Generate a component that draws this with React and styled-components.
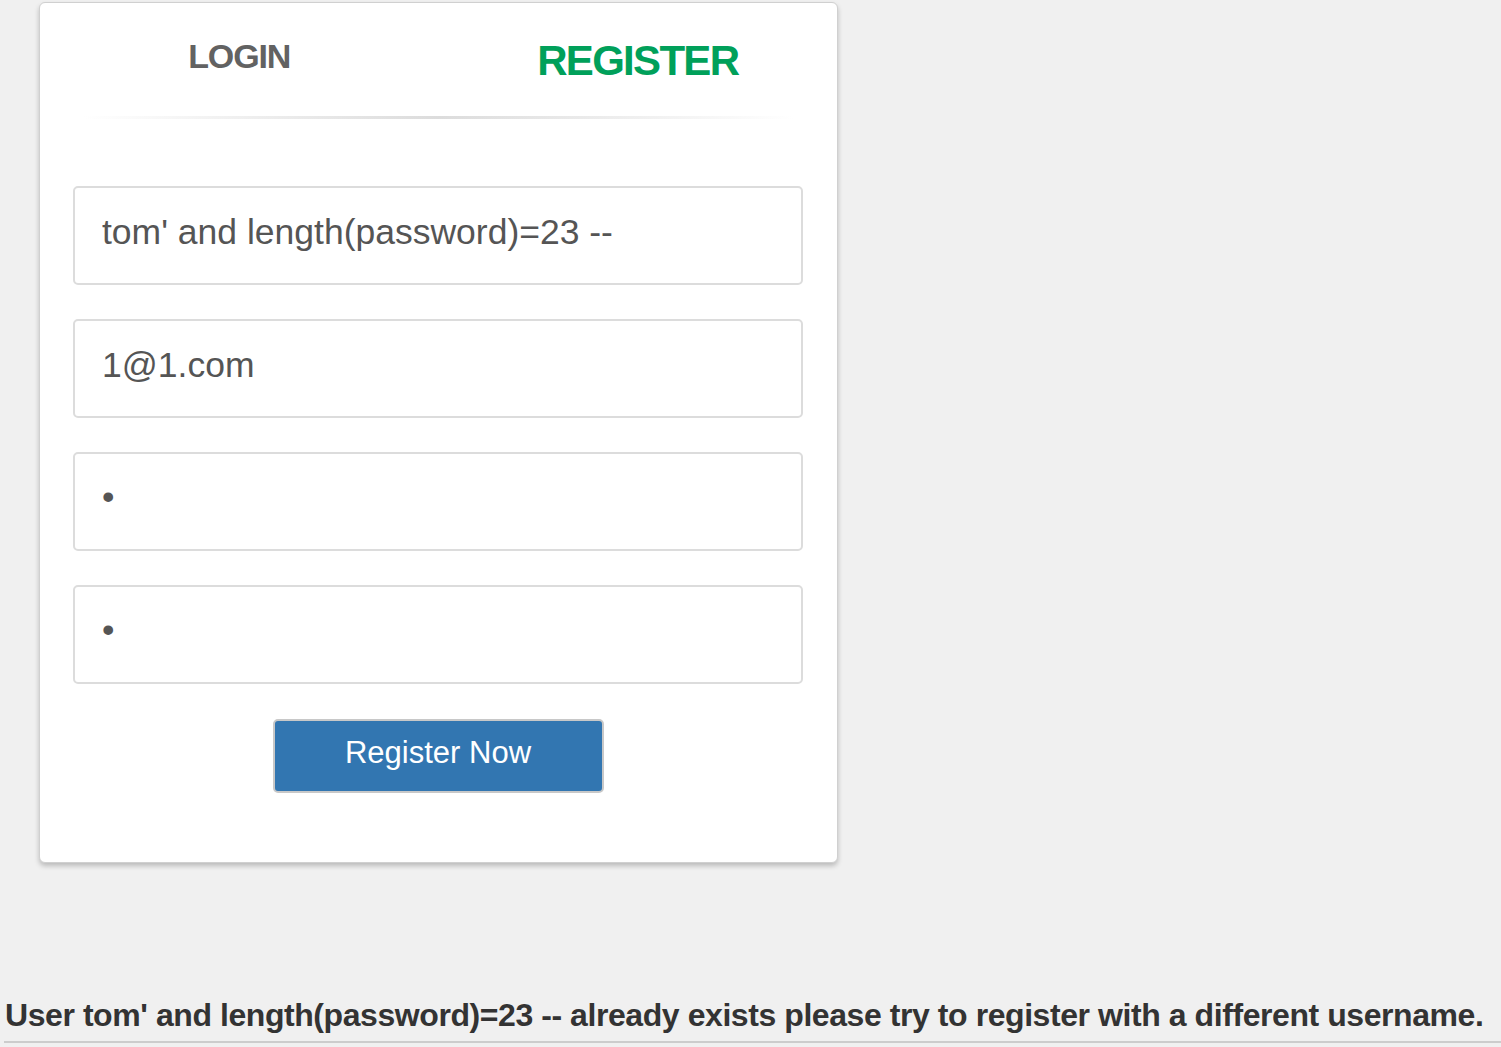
import styled, { createGlobalStyle } from "styled-components";

const GlobalStyle = createGlobalStyle`
  html, body {
    margin: 0;
    padding: 0;
    background: #f0f0f0;
    font-family: "Liberation Sans", Arial, sans-serif;
  }
`;

const Page = styled.div`
  width: 1501px;
  height: 1047px;
  display: flex;
  flex-direction: column;
  overflow: hidden;
`;

const Panel = styled.div`
  margin: 2px 0 0 39px;
  width: 799px;
  height: 861px;
  box-sizing: border-box;
  background: #fff;
  border: 1px solid #d0d0d0;
  border-radius: 6px;
  box-shadow: 0 3px 5px rgba(0, 0, 0, 0.22);
  padding: 0 35px 0 33px;
  display: flex;
  flex-direction: column;
`;

const Tabs = styled.div`
  display: flex;
  height: 113px;
  margin: 0 -35px 0 -33px;
`;

const Tab = styled.div`
  flex: 1;
  text-align: center;
  font-weight: bold;
  text-transform: uppercase;
  color: ${(p) => (p.$active ? "#00a05a" : "#626262")};
  font-size: ${(p) => (p.$active ? "42px" : "34px")};
  letter-spacing: ${(p) => (p.$active ? "-1.7px" : "-1.1px")};
  padding-top: ${(p) => (p.$active ? "37px" : "36px")};
  line-height: 1;
`;

const Divider = styled.div`
  height: 3px;
  margin: 0 8px 0 10px;
  background: linear-gradient(
    to right,
    rgba(220, 220, 220, 0),
    #dcdcdc 50%,
    rgba(220, 220, 220, 0)
  );
`;

const Form = styled.form`
  display: flex;
  flex-direction: column;
  gap: 34px;
  margin-top: 67px;
`;

const Input = styled.input`
  box-sizing: border-box;
  width: 730px;
  height: 99px;
  border: 2px solid #dcdcdc;
  border-radius: 5px;
  padding: 0 27px;
  font-family: "Liberation Sans", Arial, sans-serif;
  font-size: 35.5px;
  color: #555;
  background: #fff;
  outline: none;
  padding-bottom: ${(p) => (p.type === "password" ? "8px" : "6px")};
`;

const ButtonRow = styled.div`
  display: flex;
  justify-content: center;
  padding-left: 1px;
  margin-top: 1px;
`;

const Button = styled.button`
  width: 331px;
  height: 74px;
  background: #3276b1;
  border: 2px solid #c8c8c8;
  border-radius: 5px;
  color: #fff;
  font-family: "Liberation Sans", Arial, sans-serif;
  font-size: 31px;
  padding: 0 0 6px;
  cursor: pointer;
`;

const Message = styled.h4`
  margin: 133px 0 0;
  padding: 0 0 0 5px;
  font-size: 32px;
  font-weight: bold;
  letter-spacing: -0.43px;
  color: #333;
  line-height: 38px;
  white-space: nowrap;
`;

const Rule = styled.hr`
  margin: 7px 0 0 4px;
  border: none;
  border-top: 2px solid #ccc;
`;

export default function App() {
  return (
    <Page>
      <GlobalStyle />
      <Panel>
        <Tabs>
          <Tab>Login</Tab>
          <Tab $active>Register</Tab>
        </Tabs>
        <Divider />
        <Form onSubmit={(e) => e.preventDefault()}>
          <Input type="text" defaultValue="tom' and length(password)=23 --" />
          <Input type="email" defaultValue="1@1.com" />
          <Input type="password" defaultValue="1" />
          <Input type="password" defaultValue="1" />
          <ButtonRow>
            <Button type="submit">Register Now</Button>
          </ButtonRow>
        </Form>
      </Panel>
      <Message>
        User tom' and length(password)=23 -- already exists please try to
        register with a different username.
      </Message>
      <Rule />
    </Page>
  );
}
